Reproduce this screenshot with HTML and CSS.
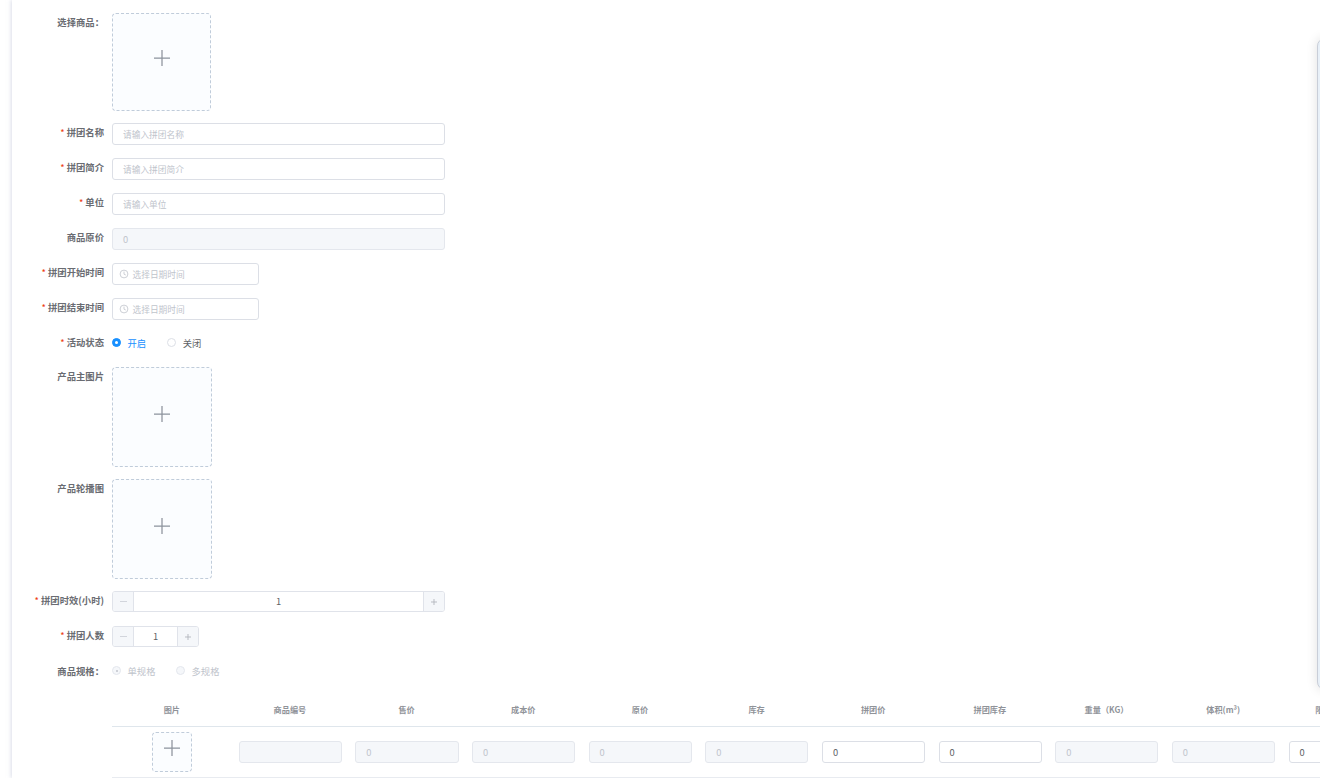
FILE: index.html
```html
<!DOCTYPE html>
<html lang="zh-CN">
<head>
<meta charset="utf-8">
<title>拼团商品</title>
<link rel="stylesheet" href="styles.css">
</head>
<body>
<main class="card">
  <form class="form">
    <div class="row row-upload-a">
      <label class="label">选择商品：</label>
      <div class="upload upload-a"><svg class="plus" viewBox="0 0 16 16"><path d="M8 0v16M0 8h16"/></svg></div>
    </div>
    <div class="row">
      <label class="label req">拼团名称</label>
      <div class="input wide placeholder">请输入拼团名称</div>
    </div>
    <div class="row">
      <label class="label req">拼团简介</label>
      <div class="input wide placeholder">请输入拼团简介</div>
    </div>
    <div class="row">
      <label class="label req">单位</label>
      <div class="input wide placeholder">请输入单位</div>
    </div>
    <div class="row">
      <label class="label">商品原价</label>
      <div class="input wide disabled">0</div>
    </div>
    <div class="row">
      <label class="label req">拼团开始时间</label>
      <div class="input date placeholder"><svg class="clock" viewBox="0 0 10 10"><circle cx="5" cy="5" r="3.9"/><path d="M5 2.6V5.2L6.8 6"/></svg>选择日期时间</div>
    </div>
    <div class="row">
      <label class="label req">拼团结束时间</label>
      <div class="input date placeholder"><svg class="clock" viewBox="0 0 10 10"><circle cx="5" cy="5" r="3.9"/><path d="M5 2.6V5.2L6.8 6"/></svg>选择日期时间</div>
    </div>
    <div class="row row-radio">
      <label class="label req">活动状态</label>
      <div class="radios">
        <span class="radio on"><i class="dot"></i>开启</span>
        <span class="radio"><i class="dot"></i>关闭</span>
      </div>
    </div>
    <div class="row">
      <label class="label">产品主图片</label>
      <div class="upload"><svg class="plus" viewBox="0 0 16 16"><path d="M8 0v16M0 8h16"/></svg></div>
    </div>
    <div class="row">
      <label class="label">产品轮播图</label>
      <div class="upload"><svg class="plus" viewBox="0 0 16 16"><path d="M8 0v16M0 8h16"/></svg></div>
    </div>
    <div class="row row-step">
      <label class="label req">拼团时效(小时)</label>
      <div class="stepper wide">
        <span class="step minus"><svg class="step-icon" viewBox="0 0 7 7"><path d="M0 3.5h7"/></svg></span><span class="step-value">1</span><span class="step plus-btn"><svg class="step-icon" viewBox="0 0 7 7"><path d="M0 3.5h7M3.5 0v7"/></svg></span>
      </div>
    </div>
    <div class="row row-step">
      <label class="label req">拼团人数</label>
      <div class="stepper small">
        <span class="step minus"><svg class="step-icon" viewBox="0 0 7 7"><path d="M0 3.5h7"/></svg></span><span class="step-value">1</span><span class="step plus-btn"><svg class="step-icon" viewBox="0 0 7 7"><path d="M0 3.5h7M3.5 0v7"/></svg></span>
      </div>
    </div>
    <div class="row row-radio row-spec">
      <label class="label">商品规格：</label>
      <div class="radios spec">
        <span class="radio off on-off"><i class="dot"></i>单规格</span>
        <span class="radio off"><i class="dot"></i>多规格</span>
      </div>
    </div>
    <div class="sku">
      <div class="sku-head">
        <span>图片</span><span>商品编号</span><span>售价</span><span>成本价</span><span>原价</span><span>库存</span><span>拼团价</span><span>拼团库存</span><span>重量（KG）</span><span>体积(m³)</span><span>限量</span>
      </div>
      <div class="sku-row">
        <div class="cell"><div class="upload mini"><svg class="plus" viewBox="0 0 16 16"><path d="M8 0v16M0 8h16"/></svg></div></div>
        <div class="cell"><div class="input disabled"></div></div>
        <div class="cell"><div class="input disabled">0</div></div>
        <div class="cell"><div class="input disabled">0</div></div>
        <div class="cell"><div class="input disabled">0</div></div>
        <div class="cell"><div class="input disabled">0</div></div>
        <div class="cell"><div class="input">0</div></div>
        <div class="cell"><div class="input">0</div></div>
        <div class="cell"><div class="input disabled">0</div></div>
        <div class="cell"><div class="input disabled">0</div></div>
        <div class="cell"><div class="input">0</div></div>
      </div>
    </div>
  </form>
</main>
<aside class="preview"></aside>
</body>
</html>
```
FILE: styles.css
```css
* { box-sizing: border-box; }
html, body { height: 100%; }
body {
  margin: 0;
  height: 778px;
  overflow: hidden;
  background: #fff;
  font-family: "Noto Sans CJK SC", "Liberation Sans", sans-serif;
  font-size: 9.33px;
  color: #606266;
}
.card {
  margin-left: 12px;
  height: 778px;
  background: #fff;
  box-shadow: -1px 0 4px rgba(190, 195, 215, .55);
}
.form { padding: 13px 0 0 0; width: 1500px; }
.row { display: flex; margin-bottom: 13px; }
.row-upload-a { margin-bottom: 12px; }
.row-step { margin-bottom: 14px; }
.row-radio { margin-bottom: 14px; height: 20px; align-items: center; }
.row-spec { margin-bottom: 11px; }
.label {
  flex: none;
  width: 100px;
  padding-right: 8px;
  height: 20px;
  line-height: 18px;
  text-align: right;
  font-weight: 700;
  white-space: nowrap;
  color: #6a6c72;
}
.row-spec .label { line-height: 20px; }
.req::before { content: "* "; color: #ed4014; font-weight: 400; }
.upload {
  width: 100px;
  height: 100px;
  display: flex;
  align-items: center;
  justify-content: center;
  padding-bottom: 7px;
  border: 1px dashed #c0ccda;
  border-radius: 4px;
  background: #fbfdff;
  margin-bottom: -1px;
}
.upload-a { width: 99px; height: 98px; margin-bottom: 0; padding-bottom: 8px; }
.upload.mini { width: 40px; height: 40px; margin: 0; padding-bottom: 8px; }
.plus { flex: none; width: 16px; height: 16px; fill: none; stroke: #8c939d; stroke-width: 1.25; }
.input {
  height: 22px;
  line-height: 20px;
  padding-left: 10px;
  border: 1px solid #dcdfe6;
  border-radius: 3px;
  background: #fff;
  white-space: nowrap;
}
.wide { width: 333px; }
.date { width: 147px; display: flex; align-items: center; padding-left: 6px; padding-top: 2px; }
.placeholder { color: #c0c4cc; font-size: 8.7px; padding-top: 1px; }
.date.placeholder { padding-top: 2px; }
.disabled { background: #f5f7fa; color: #c0c4cc; border-color: #e4e7ed; }
.clock { width: 10px; height: 10px; margin-right: 3.5px; margin-top: -2px; fill: none; stroke: #c0c4cc; stroke-width: .8; }
.radios { display: flex; align-items: center; height: 20px; }
.radio { display: flex; align-items: center; margin-right: 21px; }
.radio .dot {
  width: 9px;
  height: 9px;
  margin-right: 6.5px;
  margin-top: -1px;
  border: 1px solid #dcdfe6;
  border-radius: 50%;
  background: #fff;
}
.radio.on { color: #1890ff; }
.radio.on .dot {
  background: #1890ff;
  border-color: #1890ff;
  display: flex;
  align-items: center;
  justify-content: center;
}
.radio.on .dot::after { content: ""; width: 3px; height: 3px; border-radius: 50%; background: #fff; }
.spec .radio { margin-right: 20.5px; color: #c0c4cc; }
.radio.off .dot { background: #f5f7fa; border-color: #e4e7ed; }
.on-off .dot { display: flex; align-items: center; justify-content: center; }
.on-off .dot::after { content: ""; width: 2px; height: 2px; border-radius: 50%; background: #c0c4cc; }
.stepper {
  display: flex;
  height: 21px;
  border: 1px solid #e0e3ea;
  border-radius: 3px;
  background: #fff;
  overflow: hidden;
}
.stepper.small { width: 87px; }
.step {
  flex: none;
  width: 21px;
  display: flex;
  align-items: center;
  justify-content: center;
  background: #f5f7fa;
}
.step-icon { width: 7px; height: 7px; fill: none; stroke: #d2d5dc; stroke-width: 1; }
.plus-btn .step-icon { width: 6px; height: 6px; stroke: #b0b3ba; }
.minus { border-right: 1px solid #e0e3ea; }
.plus-btn { border-left: 1px solid #e0e3ea; }
.step-value { flex: 1; text-align: center; line-height: 19px; }
.sku { margin-left: 100px; width: 1290px; }
.sku-head, .sku-row {
  display: grid;
  grid-template-columns: 119.6px repeat(9, 116.66px) 84px;
}
.sku-head {
  height: 35px;
  line-height: 35px;
  border-bottom: 1px solid #dfe6ec;
  text-align: center;
  color: #909399;
  font-size: 8.17px;
  font-weight: 700;
}
.sku-row {
  height: 51px;
  align-items: center;
  border-bottom: 1px solid #e8ebf0;
}
.cell { padding: 0 6.4px 0 7px; display: flex; justify-content: center; }
.cell .input { width: 100%; height: 22px; }
.preview {
  position: fixed;
  left: 1317px;
  top: 38px;
  width: 40px;
  height: 652px;
  background: #e8f0f8;
  border: 1px solid #c9ced8;
  border-radius: 8px;
  box-shadow: 0 0 12px rgba(0, 0, 0, .12);
}
```
